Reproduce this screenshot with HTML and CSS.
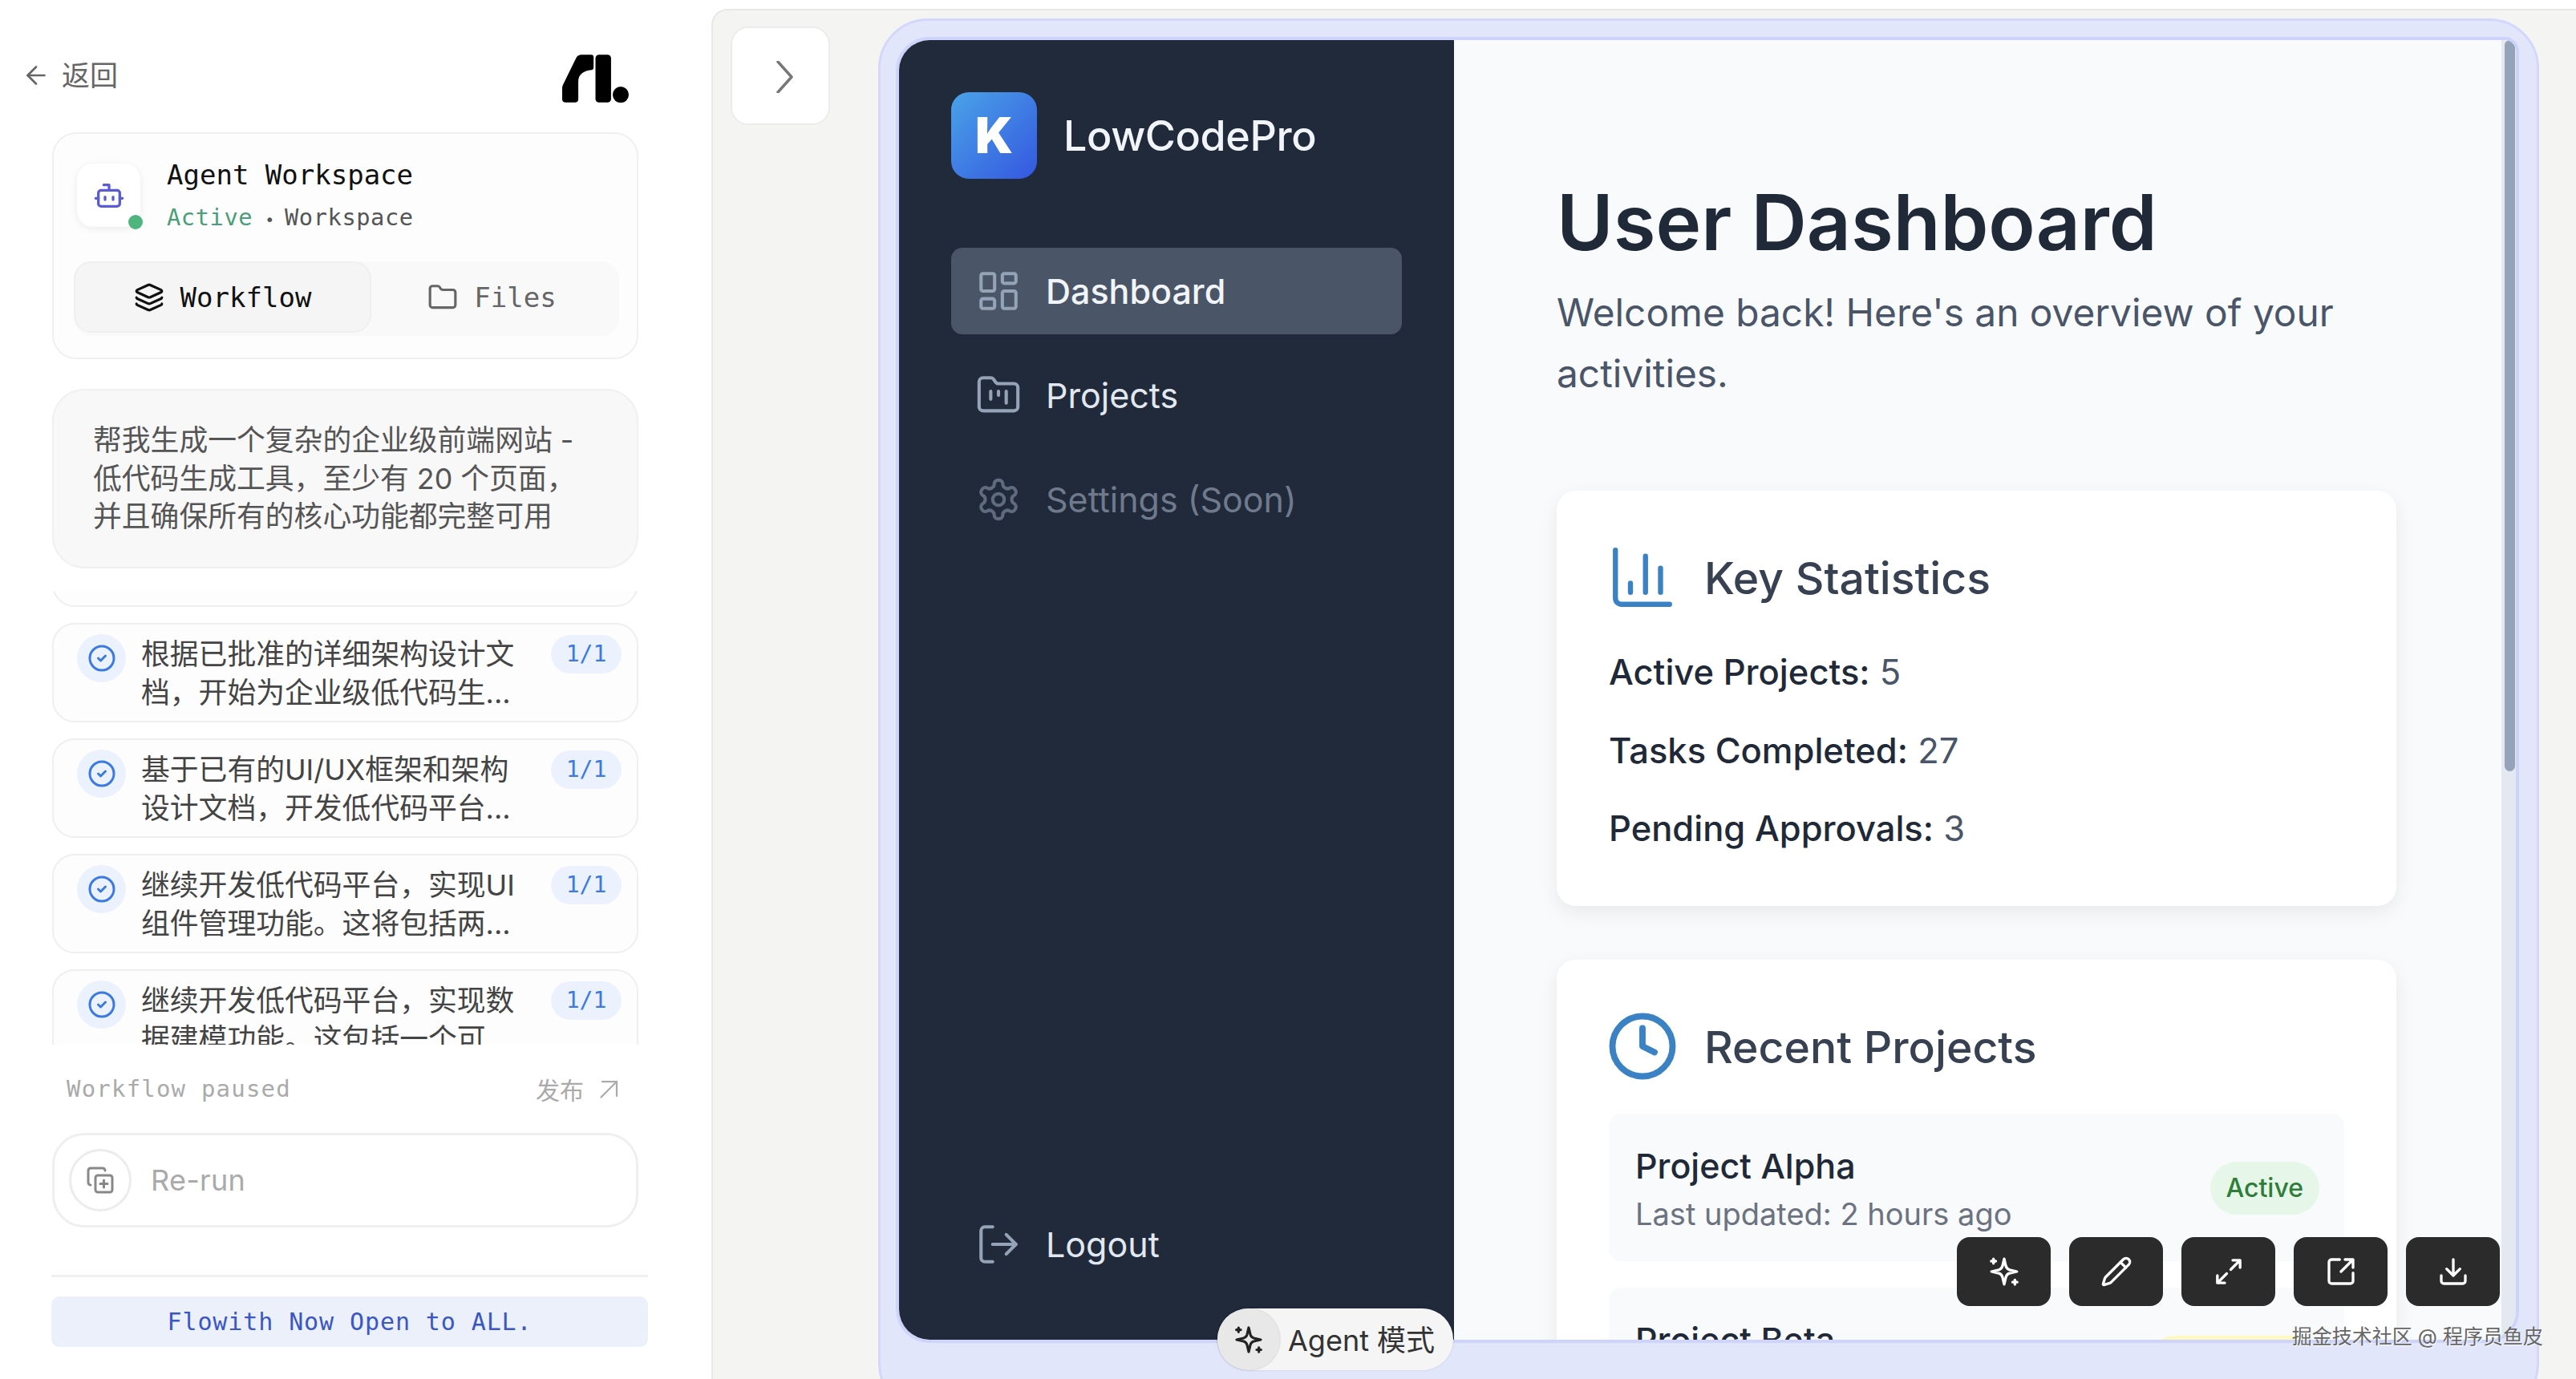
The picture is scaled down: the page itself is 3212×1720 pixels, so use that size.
FILE: index.html
```html
<!DOCTYPE html>
<html lang="zh">

<head>
    <meta charset="utf-8">
    <title>Agent Workspace</title>
    <link rel="stylesheet" href="styles.css">
</head>

<body>
    <svg class="defs" width="0" height="0">
        <symbol id="step-check" viewBox="0 0 24 24">
            <circle cx="12" cy="12" r="10"/>
            <path d="M9 12l2 2 4-4"/>
        </symbol>
        <symbol id="spark" viewBox="0 0 24 24">
            <path d="M10.700 8 12 2.500 13.300 8a4 4 0 0 0 2.700 2.700L21.500 12 16 13.300a4 4 0 0 0-2.700 2.700L12 21.500 10.700 16a4 4 0 0 0-2.700-2.700L2.500 12 8 10.700a4 4 0 0 0 2.700-2.700z"/>
            <path d="M4 2.500v3.400M2.300 4.200h3.400M20 18.200v3.400M18.300 19.900h3.400"/>
        </symbol>
    </svg>

    <div class="page">
        <aside class="chat">
            <header class="chat-top">
                <a class="back">
                    <svg class="ico back-ico" viewBox="0 0 24 24"><path d="m12 19-7-7 7-7"/><path d="M19 12H5"/></svg>
                    <span>返回</span>
                </a>
                <svg class="logo" viewBox="0 0 248 178">
                    <path d="M72 0H108Q117 0 117 9V48Q117 56 109 57C82 60 60 72 60 100V165Q60 178 47 178H13Q0 178 0 165V125Q0 118 3 112L52 12Q58 0 72 0Z"/>
                    <rect x="124" width="58" height="178" rx="13"/>
                    <circle cx="218" cy="149" r="30"/>
                </svg>
            </header>

            <section class="agent-card">
                <div class="agent-head">
                    <div class="agent-avatar">
                        <svg class="ico bot-ico" viewBox="0 0 24 24"><path d="M12 8V4H8"/><rect x="4" y="8" width="16" height="12" rx="2"/><path d="M2 14h2M20 14h2M15 13v2M9 13v2"/></svg>
                        <span class="agent-dot"></span>
                    </div>
                    <div class="agent-info">
                        <div class="agent-title">Agent Workspace</div>
                        <div class="agent-sub"><span class="agent-state">Active</span><span class="agent-sep">•</span>Workspace</div>
                    </div>
                </div>
                <div class="tabs">
                    <div class="tab tab-on">
                        <svg class="ico tab-ico" viewBox="0 0 24 24"><path d="M12.830 2.180a2 2 0 0 0-1.660 0L2.600 6.080a1 1 0 0 0 0 1.830l8.580 3.910a2 2 0 0 0 1.660 0l8.580-3.900a1 1 0 0 0 0-1.830Z"/><path d="M2 12a1 1 0 0 0 .58.91l8.600 3.910a2 2 0 0 0 1.650 0l8.580-3.900A1 1 0 0 0 22 12"/><path d="M2 17a1 1 0 0 0 .58.91l8.600 3.910a2 2 0 0 0 1.650 0l8.580-3.900A1 1 0 0 0 22 17"/></svg>
                        Workflow
                    </div>
                    <div class="tab tab-files">
                        <svg class="ico tab-ico" viewBox="0 0 24 24"><path d="M20 20a2 2 0 0 0 2-2V8a2 2 0 0 0-2-2h-7.900a2 2 0 0 1-1.690-.9L9.600 3.900A2 2 0 0 0 7.930 3H4a2 2 0 0 0-2 2v13a2 2 0 0 0 2 2Z"/></svg>
                        Files
                    </div>
                </div>
            </section>

            <section class="prompt">帮我生成一个复杂的企业级前端网站 - 低代码生成工具，至少有 20 个页面，并且确保所有的核心功能都完整可用</section>

            <section class="steps">
                <div class="step step-cut"></div>
                <div class="step">
                    <span class="step-mark"><svg class="ico"><use href="#step-check"/></svg></span>
                    <p class="step-text">根据已批准的详细架构设计文档，开始为企业级低代码生...</p>
                    <span class="step-count">1/1</span>
                </div>
                <div class="step">
                    <span class="step-mark"><svg class="ico"><use href="#step-check"/></svg></span>
                    <p class="step-text">基于已有的UI/UX框架和架构设计文档，开发低代码平台...</p>
                    <span class="step-count">1/1</span>
                </div>
                <div class="step">
                    <span class="step-mark"><svg class="ico"><use href="#step-check"/></svg></span>
                    <p class="step-text">继续开发低代码平台，实现UI组件管理功能。这将包括两...</p>
                    <span class="step-count">1/1</span>
                </div>
                <div class="step">
                    <span class="step-mark"><svg class="ico"><use href="#step-check"/></svg></span>
                    <p class="step-text">继续开发低代码平台，实现数据建模功能。这包括一个可...</p>
                    <span class="step-count">1/1</span>
                </div>
            </section>

            <div class="status">
                <span class="status-text">Workflow paused</span>
                <span class="publish">发布
                    <svg class="ico publish-ico" viewBox="0 0 24 24"><path d="M6 6h12v12"/><path d="M5 19 18 6"/></svg>
                </span>
            </div>

            <div class="rerun">
                <span class="rerun-btn">
                    <svg class="ico rerun-ico" viewBox="0 0 24 24"><path d="M15 12v6M12 15h6"/><rect x="8" y="8" width="14" height="14" rx="2"/><path d="M4 16c-1.100 0-2-.9-2-2V4c0-1.100.9-2 2-2h10c1.100 0 2 .9 2 2"/></svg>
                </span>
                <span class="rerun-label">Re-run</span>
            </div>

            <div class="chat-line"></div>
            <div class="notice">Flowith Now Open to ALL.</div>
        </aside>

        <main class="stage">
            <button class="collapse">
                <svg class="chevron" viewBox="0 0 21 40"><path d="M2 1l17 19L2 39"/></svg>
            </button>

            <div class="frame">
                <div class="app">
                    <nav class="side">
                        <div class="brand">
                            <span class="brand-tile">K</span>
                            <span class="brand-name">LowCodePro</span>
                        </div>
                        <a class="nav-item nav-on">
                            <svg class="ico nav-ico" viewBox="0 0 24 24"><rect x="3" y="3" width="7" height="9" rx="1"/><rect x="14" y="3" width="7" height="5" rx="1"/><rect x="14" y="12" width="7" height="9" rx="1"/><rect x="3" y="16" width="7" height="5" rx="1"/></svg>
                            Dashboard
                        </a>
                        <a class="nav-item">
                            <svg class="ico nav-ico" viewBox="0 0 24 24"><path d="M4 20h16a2 2 0 0 0 2-2V8a2 2 0 0 0-2-2h-7.930a2 2 0 0 1-1.660-.9l-.82-1.200A2 2 0 0 0 7.930 3H4a2 2 0 0 0-2 2v13c0 1.100.9 2 2 2Z"/><path d="M8 10v4M12 10v2M16 10v6"/></svg>
                            Projects
                        </a>
                        <a class="nav-item nav-off">
                            <svg class="ico nav-ico" viewBox="0 0 24 24"><path d="M12.220 2h-.44a2 2 0 0 0-2 2v.18a2 2 0 0 1-1 1.730l-.43.25a2 2 0 0 1-2 0l-.15-.08a2 2 0 0 0-2.730.73l-.22.38a2 2 0 0 0 .73 2.730l.15.1a2 2 0 0 1 1 1.720v.51a2 2 0 0 1-1 1.740l-.15.09a2 2 0 0 0-.73 2.730l.22.38a2 2 0 0 0 2.730.73l.15-.08a2 2 0 0 1 2 0l.43.25a2 2 0 0 1 1 1.730V20a2 2 0 0 0 2 2h.44a2 2 0 0 0 2-2v-.18a2 2 0 0 1 1-1.730l.43-.25a2 2 0 0 1 2 0l.15.08a2 2 0 0 0 2.730-.73l.22-.39a2 2 0 0 0-.73-2.730l-.15-.08a2 2 0 0 1-1-1.740v-.5a2 2 0 0 1 1-1.740l.15-.09a2 2 0 0 0 .73-2.730l-.22-.38a2 2 0 0 0-2.730-.73l-.15.08a2 2 0 0 1-2 0l-.43-.25a2 2 0 0 1-1-1.730V4a2 2 0 0 0-2-2z"/><circle cx="12" cy="12" r="3"/></svg>
                            Settings (Soon)
                        </a>
                        <a class="nav-item nav-logout">
                            <svg class="ico nav-ico" viewBox="0 0 24 24"><path d="M9 21H5a2 2 0 0 1-2-2V5a2 2 0 0 1 2-2h4"/><path d="m16 17 5-5-5-5"/><path d="M21 12H9"/></svg>
                            Logout
                        </a>
                    </nav>

                    <div class="content">
                        <h1 class="page-title">User Dashboard</h1>
                        <p class="page-lead">Welcome back! Here's an overview of your activities.</p>

                        <section class="card">
                            <h2 class="card-head">
                                <svg class="ico card-ico stat-ico" viewBox="0 0 24 24"><path d="M3 3v16a2 2 0 0 0 2 2h16"/><path d="M18 17V9M13 17V5M8 17v-3"/></svg>
                                Key Statistics
                            </h2>
                            <div class="stats">
                                <p class="stat"><b>Active Projects:</b> 5</p>
                                <p class="stat"><b>Tasks Completed:</b> 27</p>
                                <p class="stat"><b>Pending Approvals:</b> 3</p>
                            </div>
                        </section>

                        <section class="card card-recent">
                            <h2 class="card-head">
                                <svg class="ico card-ico clock-ico" viewBox="0 0 24 24"><circle cx="12" cy="12" r="10"/><path d="M12 6v6l4 2"/></svg>
                                Recent Projects
                            </h2>
                            <div class="project">
                                <div>
                                    <div class="project-name">Project Alpha</div>
                                    <div class="project-time">Last updated: 2 hours ago</div>
                                </div>
                                <span class="pill pill-green">Active</span>
                            </div>
                            <div class="project">
                                <div>
                                    <div class="project-name">Project Beta</div>
                                    <div class="project-time">Last updated: 1 day ago</div>
                                </div>
                                <span class="pill pill-yellow">In Progress</span>
                            </div>
                        </section>
                    </div>

                    <div class="scrollbar"><div class="scroll-thumb"></div></div>

                    <div class="tools">
                        <button class="tool"><svg class="ico tool-ico"><use href="#spark"/></svg></button>
                        <button class="tool"><svg class="ico tool-ico" viewBox="0 0 24 24"><path d="M21.174 6.812a1 1 0 0 0-3.986-3.987L3.842 16.174a2 2 0 0 0-.5.83l-1.321 4.352a.5.5 0 0 0 .623.622l4.353-1.32a2 2 0 0 0 .83-.497z"/><path d="m15 5 4 4"/></svg></button>
                        <button class="tool"><svg class="ico tool-ico" viewBox="0 0 24 24"><path d="M13.500 10.500 20 4M15 3.500h5.500V9M10.500 13.500 4 20M3.500 15v5.500H9"/></svg></button>
                        <button class="tool"><svg class="ico tool-ico" viewBox="0 0 24 24"><path d="M21 13v6a2 2 0 0 1-2 2H5a2 2 0 0 1-2-2V5a2 2 0 0 1 2-2h6"/><path d="m21 3-9 9M15 3h6v6"/></svg></button>
                        <button class="tool"><svg class="ico tool-ico" viewBox="0 0 24 24"><path d="M21 15v4a2 2 0 0 1-2 2H5a2 2 0 0 1-2-2v-4"/><path d="m7 10 5 5 5-5M12 15V3"/></svg></button>
                    </div>
                </div>

                <div class="agent-mode">
                    <span class="agent-mode-btn"><svg class="ico mode-ico"><use href="#spark"/></svg></span>
                    <span class="agent-mode-text">Agent 模式</span>
                </div>
            </div>
        </main>

        <div class="watermark">掘金技术社区 @ 程序员鱼皮</div>
    </div>
</body>

</html>
```

FILE: styles.css
```css
* {
    box-sizing: border-box;
}

html, body {
    margin: 0;
    height: 1720px;
    overflow: hidden;
    background: #fff;
}

body {
    font-family: Inter, "Noto Sans CJK SC", sans-serif;
}

.defs {
    position: absolute;
}

.ico {
    fill: none;
    stroke: currentColor;
    stroke-width: 2;
    stroke-linecap: round;
    stroke-linejoin: round;
}

p, h1, h2 {
    margin: 0;
}

.page {
    display: flex;
    height: 1720px;
    position: relative;
}

/* left chat column */
.chat {
    width: 887px;
    flex: none;
    padding-top: 68px;
    font-family: Inter, "Noto Sans CJK SC", sans-serif;
}

.chat-top {
    display: flex;
    justify-content: space-between;
    align-items: center;
    height: 60px;
    padding: 0 103px 0 27px;
}

.back {
    display: flex;
    align-items: center;
    gap: 14px;
    margin-bottom: 8px;
    color: #666;
    font-size: 35px;
    line-height: 48px;
}

.back-ico {
    width: 36px;
    height: 36px;
    stroke-width: 1.800;
}

.logo {
    width: 83px;
    height: 60px;
    fill: #000;
}

.agent-card {
    width: 731px;
    height: 283px;
    margin: 37px 0 0 65px;
    padding: 37px 25px 0;
    background: #fdfdfd;
    border: 2px solid #f0f0f0;
    border-radius: 30px;
}

.agent-head {
    display: flex;
    gap: 33px;
    height: 79px;
    padding-left: 4px;
}

.agent-avatar {
    position: relative;
    width: 79px;
    height: 79px;
    display: flex;
    align-items: center;
    justify-content: center;
    background: #fff;
    border-radius: 20px;
    box-shadow: 0 2px 10px rgba(0, 0, 0, .08);
    color: #5b5bd6;
}

.bot-ico {
    width: 40px;
    height: 40px;
}

.agent-dot {
    position: absolute;
    right: -3px;
    bottom: -3px;
    width: 18px;
    height: 18px;
    border-radius: 50%;
    background: #4fb57f;
}

.agent-info {
    display: flex;
    flex-direction: column;
    gap: 25px;
    font-family: "DejaVu Sans Mono", monospace;
}

.agent-title {
    font-size: 34px;
    line-height: 28px;
    color: #111;
}

.agent-sub {
    font-size: 28.700px;
    letter-spacing: .6px;
    line-height: 28px;
    color: #555;
    white-space: nowrap;
}

.agent-state {
    color: #4a9e78;
}

.agent-sep {
    margin: 0 12px 0 15px;
    font-size: 20px;
}

.tabs {
    display: flex;
    width: 680px;
    height: 93px;
    margin-top: 43px;
    background: #f9f9f9;
    border-radius: 22px;
    font-family: "DejaVu Sans Mono", monospace;
    font-size: 34px;
    color: #666;
}

.tab {
    flex: 1;
    display: flex;
    align-items: center;
    justify-content: center;
    gap: 20px;
    height: 89px;
}

.tab-files {
    padding-right: 8px;
}

.tab-on {
    flex: none;
    width: 371px;
    background: #f5f5f5;
    border: 2px solid #efefef;
    border-radius: 22px;
    color: #111;
}

.tab-ico {
    width: 38px;
    height: 38px;
}

.prompt {
    width: 731px;
    height: 224px;
    margin: 37px 0 0 65px;
    padding: 39px 68px 0 49px;
    background: #f8f8f8;
    border: 2px solid #f0f0f0;
    border-radius: 40px;
    font-size: 35.800px;
    line-height: 47.500px;
    color: #555;
}

.steps {
    width: 731px;
    height: 566px;
    margin: 28px 0 0 65px;
    display: flex;
    flex-direction: column;
    gap: 20px;
    overflow: hidden;
}

.step {
    flex: none;
    position: relative;
    display: flex;
    height: 124px;
    padding: 12px 18px 0 29px;
    background: #fdfdfd;
    border: 2px solid #efefef;
    border-radius: 28px;
}

.step-cut {
    margin-top: -104px;
}

.step-mark {
    flex: none;
    width: 61px;
    height: 60px;
    display: flex;
    align-items: center;
    justify-content: center;
    border-radius: 50%;
    background: #ebf2fe;
    color: #3b7be0;
}

.step-mark .ico {
    width: 36px;
    height: 36px;
}

.step-text {
    width: 490px;
    margin: 2px 0 0 19px;
    font-size: 35.800px;
    line-height: 47.500px;
    color: #444;
}

.step-count {
    position: absolute;
    right: 19px;
    top: 13px;
    width: 88px;
    height: 48px;
    border-radius: 24px;
    background: #ebf2fe;
    color: #3b7be0;
    font-family: "DejaVu Sans Mono", monospace;
    font-size: 28px;
    line-height: 48px;
    text-align: center;
}

.status {
    display: flex;
    justify-content: space-between;
    align-items: center;
    width: 731px;
    height: 40px;
    margin: 35px 0 0 65px;
    padding: 0 18px 0 18px;
    color: #aaa;
}

.status-text {
    font-family: "DejaVu Sans Mono", monospace;
    font-size: 29px;
    letter-spacing: 1.200px;
}

.publish {
    display: flex;
    align-items: center;
    gap: 14px;
    font-size: 30px;
}

.publish-ico {
    width: 36px;
    height: 36px;
    stroke-width: 1.500;
}

.rerun {
    display: flex;
    align-items: center;
    gap: 24px;
    width: 731px;
    height: 118px;
    margin: 35px 0 0 65px;
    padding-left: 18px;
    border: 3px solid #efefef;
    border-radius: 40px;
    background: #fff;
}

.rerun-btn {
    width: 78px;
    height: 78px;
    display: flex;
    align-items: center;
    justify-content: center;
    border: 3px solid #ececec;
    border-radius: 50%;
    color: #888;
}

.rerun-ico {
    width: 36px;
    height: 36px;
}

.rerun-label {
    font-size: 36px;
    letter-spacing: .3px;
    color: #aaa;
}

.chat-line {
    width: 744px;
    height: 3px;
    margin: 59px 0 0 64px;
    background: #f0f0f0;
}

.notice {
    width: 744px;
    height: 63px;
    margin: 24px 0 0 64px;
    border-radius: 10px;
    background: #ebf0fb;
    color: #3a57c4;
    font-family: "DejaVu Sans Mono", monospace;
    font-size: 30px;
    letter-spacing: .900px;
    line-height: 63px;
    text-align: center;
}

/* right preview area */
.stage {
    flex: 1;
    display: flex;
    align-items: flex-start;
    margin-top: 11px;
    background: #f4f4f2;
    border-top: 2px solid #e8e8e6;
    border-left: 2px solid #e8e8e6;
    border-top-left-radius: 20px;
}

.collapse {
    flex: none;
    width: 124px;
    height: 123px;
    margin: 20px 0 0 22px;
    padding: 0 0 0 10px;
    background: #fff;
    border: 2px solid #ececec;
    border-radius: 22px;
}

.chevron {
    width: 21px;
    height: 40px;
    fill: none;
    stroke: #777;
    stroke-width: 3.500;
    stroke-linecap: round;
    stroke-linejoin: round;
    display: block;
    margin: 3px auto 0;
}

.frame {
    position: relative;
    flex: none;
    width: 2071px;
    height: 1740px;
    margin: 10px 0 0 60px;
    padding: 20px 22px 0 19px;
    background: #e2e6fa;
    border: 3px solid #d3d7fb;
    border-radius: 62px;
}

.app {
    position: relative;
    display: flex;
    height: 1629px;
    overflow: hidden;
    border: 4px solid #ced3fb;
    border-radius: 42px 18px 40px 42px;
    background: #f8fafc;
}

.side {
    flex: none;
    display: flex;
    flex-direction: column;
    width: 692px;
    padding: 65px;
    background: #212a3b;
}

.brand {
    display: flex;
    align-items: center;
    gap: 33px;
    height: 108px;
    margin-bottom: 86px;
}

.brand-tile {
    width: 107px;
    height: 108px;
    border-radius: 22px;
    background: linear-gradient(135deg, #4aa3e8, #3457e0);
    color: #fff;
    font-size: 62px;
    font-weight: 900;
    line-height: 108px;
    text-align: center;
}

.brand-name {
    font-size: 52px;
    font-weight: 500;
    letter-spacing: -.4px;
    color: #f1f5f9;
}

.nav-item {
    display: flex;
    align-items: center;
    gap: 36px;
    height: 108px;
    margin-bottom: 22px;
    padding-left: 30px;
    border-radius: 14px;
    font-size: 43px;
    color: #e2e8f0;
}

.nav-ico {
    flex: none;
    width: 58px;
    height: 58px;
    margin-right: -6px;
    color: #94a3b8;
    stroke-width: 1.700;
}

.nav-on {
    background: #4a5568;
    color: #f1f5f9;
    font-weight: 500;
}

.nav-off {
    color: #6f7a8c;
}

.nav-off .nav-ico {
    color: #5f6b7e;
}

.nav-logout {
    margin: auto 0 0;
}

.content {
    flex: 1;
    min-width: 0;
    overflow: hidden;
    padding: 167px 131px 0 128px;
}

.page-title {
    font-size: 96px;
    font-weight: 600;
    line-height: 120px;
    color: #1f2937;
}

.page-lead {
    margin-top: 15px;
    font-size: 47.800px;
    line-height: 76px;
    color: #4a5568;
}

.card {
    height: 518px;
    margin-top: 108px;
    padding: 60px 65px 0;
    background: #fff;
    border-radius: 24px;
    box-shadow: 0 8px 24px rgba(0, 0, 0, .07);
}

.card-recent {
    height: auto;
    margin-top: 67px;
    padding-bottom: 60px;
}

.card-head {
    display: flex;
    align-items: center;
    gap: 32px;
    height: 96px;
    margin-left: -3px;
    font-size: 55.300px;
    font-weight: 500;
    color: #374151;
}

.card-ico {
    flex: none;
    width: 90px;
    height: 90px;
    color: #3a82c4;
}

.stat-ico {
    stroke-width: 1.700;
}

.clock-ico {
    stroke-width: 2.100;
}

.stats {
    display: flex;
    flex-direction: column;
    gap: 39.500px;
    margin-top: 41px;
}

.stat {
    font-size: 43.500px;
    line-height: 58px;
    color: #4a5568;
}

.stat b {
    font-weight: 500;
    color: #1f2937;
}

.project {
    display: flex;
    justify-content: space-between;
    align-items: center;
    height: 184px;
    margin-top: 33px;
    padding: 5px 31px 0 33px;
    background: #f8fafc;
    border-radius: 16px;
}

.card-head + .project {
    margin-top: 36px;
}

.project-name {
    font-size: 43px;
    font-weight: 500;
    line-height: 58px;
    color: #1f2937;
}

.project-time {
    margin-top: 2px;
    font-size: 38px;
    line-height: 58px;
    color: #6b7280;
}

.pill {
    height: 66px;
    margin-bottom: 3px;
    padding: 0 20px;
    border-radius: 33px;
    font-size: 32px;
    font-weight: 500;
    line-height: 66px;
}

.pill-green {
    background: #e6f7e9;
    color: #2f7d3a;
}

.pill-yellow {
    background: #fef9c3;
    color: #854d0e;
}

.scrollbar {
    flex: none;
    width: 18px;
    padding: 0 1px 0 4px;
    background: #e3e9f1;
}

.scroll-thumb {
    height: 912px;
    border-radius: 7px;
    background: #94a3b8;
}

.tools {
    position: absolute;
    right: 20px;
    bottom: 42px;
    display: flex;
    gap: 23px;
}

.tool {
    display: flex;
    align-items: center;
    justify-content: center;
    width: 117px;
    height: 86px;
    padding: 0;
    border: none;
    border-radius: 16px;
    background: #2b2b2b;
    color: #fff;
}

.tool-ico {
    width: 40px;
    height: 40px;
}

.agent-mode {
    position: absolute;
    left: 420px;
    top: 1606px;
    display: flex;
    align-items: center;
    gap: 10px;
    width: 294px;
    height: 77px;
    background: #f5f5f5;
    border-radius: 39px;
    box-shadow: 0 0 3px rgba(0, 0, 0, .12);
    font-size: 36px;
    color: #333;
}

.agent-mode-text {
    margin-bottom: 3px;
}

.agent-mode-btn {
    width: 78px;
    height: 77px;
    display: flex;
    align-items: center;
    justify-content: center;
    border-radius: 50%;
    background: #e8e8e8;
    box-shadow: 0 0 2px rgba(0, 0, 0, .25);
}

.mode-ico {
    width: 38px;
    height: 38px;
    color: #222;
}

.watermark {
    position: absolute;
    right: 41px;
    bottom: 35px;
    font-size: 25px;
    line-height: 36px;
    color: #666;
    text-shadow: 1px 1px 1px #fff;
    white-space: nowrap;
}
```
